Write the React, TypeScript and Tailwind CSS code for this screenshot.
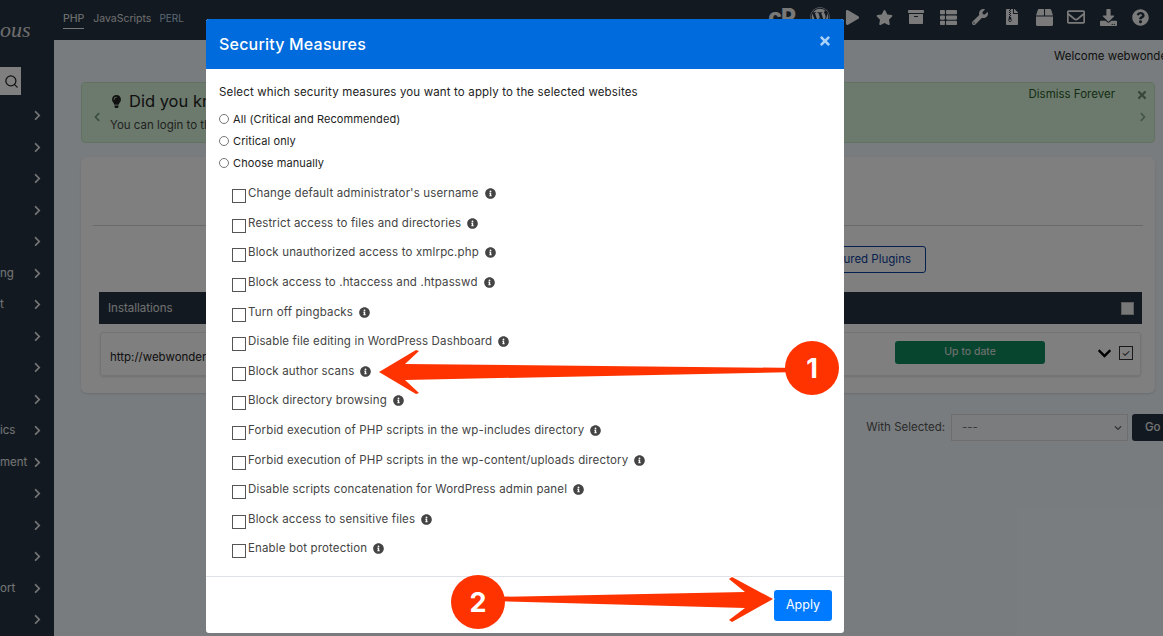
import {
  FaArchive,
  FaBox,
  FaChevronDown,
  FaChevronLeft,
  FaChevronRight,
  FaDownload,
  FaFileArchive,
  FaInfoCircle,
  FaLightbulb,
  FaPlay,
  FaQuestionCircle,
  FaRegEnvelope,
  FaStar,
  FaThList,
  FaTimes,
  FaWordpress,
  FaWrench,
} from "react-icons/fa";
import { Search } from "lucide-react";

const sideLabels = ["", "", "", "", "", "ng", "t", "", "", "", "ics", "ment", "", "", "", "ort", ""];

const measures = [
  "Change default administrator's username",
  "Restrict access to files and directories",
  "Block unauthorized access to xmlrpc.php",
  "Block access to .htaccess and .htpasswd",
  "Turn off pingbacks",
  "Disable file editing in WordPress Dashboard",
  "Block author scans",
  "Block directory browsing",
  "Forbid execution of PHP scripts in the wp-includes directory",
  "Forbid execution of PHP scripts in the wp-content/uploads directory",
  "Disable scripts concatenation for WordPress admin panel",
  "Block access to sensitive files",
  "Enable bot protection",
];

const topIcons = [
  { icon: FaWordpress, size: 20 },
  { icon: FaPlay, size: 15 },
  { icon: FaStar, size: 17 },
  { icon: FaArchive, size: 16 },
  { icon: FaThList, size: 17 },
  { icon: FaWrench, size: 16 },
  { icon: FaFileArchive, size: 16 },
  { icon: FaBox, size: 17 },
  { icon: FaRegEnvelope, size: 18 },
  { icon: FaDownload, size: 17 },
  { icon: FaQuestionCircle, size: 17 },
];

function Sidebar() {
  return (
    <aside className="w-[54px] shrink-0 overflow-hidden bg-[#243342]">
      <div className="h-[67px] overflow-hidden pt-[17px] font-['Liberation_Serif',serif] text-[22px] leading-[26px] text-[#dddddd] italic">
        ous
      </div>
      <div className="flex h-[28px] w-[21px] items-center justify-end bg-white pr-[2px] text-[#222]">
        <Search size={15} strokeWidth={2} />
      </div>
      <ul className="mt-[5px]">
        {sideLabels.map((label, i) => (
          <li key={i} className="flex h-[31.5px] items-center justify-between pr-[11px] text-[11.5px] text-[#e8e8e8]">
            <span>{label}</span>
            <FaChevronRight size={11} />
          </li>
        ))}
      </ul>
    </aside>
  );
}

function TopBar() {
  return (
    <header className="flex h-[40px] items-start bg-[#243342] pl-[9px] text-[10.5px] text-[#eeeeee]">
      <a className="mt-[11px] h-[18px] border-b border-[#eeeeee]">PHP</a>
      <a className="mt-[11px] ml-[9px] text-[#dddddd]">JavaScripts</a>
      <a className="mt-[11px] ml-[8px] text-[10px] text-[#b8d0e0]">PERL</a>
      <div className="ml-auto flex items-center pt-[7px] pr-[7px]">
        <span className="mr-[9px] text-[23px] leading-[20px] font-extrabold tracking-[-1px] text-[#f0f0f0]">cP</span>
        {topIcons.map(({ icon: Icon, size }, i) => (
          <span key={i} className="flex h-[20px] w-[32px] items-center justify-center text-[#f5f5f5]">
            <Icon size={size} />
          </span>
        ))}
      </div>
    </header>
  );
}

function Content() {
  return (
    <main className="h-[596px] bg-[#f2f9fd] pr-[8px] pl-[27px] text-[#222]">
      <p className="h-[42px] pt-[8px] pl-[973px] text-[11.5px] whitespace-nowrap">Welcome webwonderous</p>

      <section className="relative flex h-[61px] rounded-[4px] border border-[#c5e5c5] bg-[#d7f4d8] pl-[10px]">
        <FaChevronLeft size={10} className="mt-[29px] text-[#6e9a78]" />
        <div className="ml-[8px] pt-[7px]">
          <div className="flex items-center gap-[6px] text-[16.5px] leading-[22px]">
            <FaLightbulb size={13} className="text-[#222]" />
            Did you know?
          </div>
          <p className="mt-[5px] text-[11.5px] text-[#444]">You can login to the admin panel with a single click</p>
        </div>
        <div className="absolute top-[3px] right-[6px] flex items-center text-[11.5px] text-[#2a5a2a]">
          Dismiss Forever
          <FaTimes size={12} className="ml-[21px] text-[#6f8f75]" />
        </div>
        <FaChevronRight size={10} className="absolute top-[29px] right-[6px] text-[#84a98c]" />
      </section>

      <section className="mt-[14px] h-[236px] rounded-[6px] bg-white px-[12px] pt-[68px] shadow-sm">
        <div className="border-t border-[#d5d5d5]" />
        <div className="mt-[20px] flex justify-end pr-[217px]">
          <button className="h-[27px] rounded-[3px] border border-[#0b3f9c] px-[14px] text-[11.5px] text-[#0b3f9c]">
            Featured Plugins
          </button>
        </div>
        <div className="mt-[19px] ml-[6px] flex h-[32px] w-[1043px] items-center justify-between bg-[#243342] pr-[8px] pl-[9px] text-[11.5px] text-[#e0e0e0]">
          <span className="pt-[1px]">Installations</span>
          <span className="h-[13px] w-[13px] border border-[#bbbbbb] bg-[#f0f0f0]" />
        </div>
        <div className="mt-[8px] ml-[7px] flex h-[44px] w-[1041px] items-center rounded-[3px] border border-[#e8e8e8] pl-[9px] text-[11.5px] shadow-sm">
          <span className="pt-[7px]">http://webwonderous.com</span>
          <div className="mr-[1px] mb-[4px] ml-auto flex h-[23px] w-[150px] items-center justify-center rounded-[3px] bg-[#108a5c] text-[10.5px] text-[#e8e8e8]">
            Up to date
          </div>
          <FaChevronDown size={15} className="mb-[2px] ml-[51px] text-black" />
          <span className="mr-[7px] mb-[3px] ml-[7px] flex h-[14px] w-[14px] items-center justify-center border border-[#333] text-[10px] leading-none">
            ✓
          </span>
        </div>
      </section>

      <div className="mt-[21px] flex h-[27px] items-center justify-end whitespace-nowrap text-[11.5px]">
        <span className="mr-[6px] pt-[1px] text-[#555]">With Selected:</span>
        <div className="flex h-[27px] w-[177px] shrink-0 items-center justify-between border border-[#dddddd] bg-[#f5f8fb] pr-[5px] pl-[10px] text-[#777]">
          ---
          <FaChevronDown size={8} className="text-[#666]" />
        </div>
        <button className="-mr-[16px] ml-[4px] h-[27px] w-[39px] shrink-0 rounded-l-[3px] bg-[#243342] pl-[13px] text-left font-medium text-[#e8e8e8]">
          Go
        </button>
      </div>
    </main>
  );
}

function SecurityModal() {
  return (
    <div className="absolute top-[19px] left-[206px] flex h-[614px] w-[638px] flex-col overflow-hidden rounded-[3px] bg-white text-[#2f2f2f]">
      <div className="flex h-[50px] shrink-0 items-center justify-between bg-[#006bdc] pr-[12px] pl-[13px] text-white">
        <h2 className="mb-[1px] text-[16px] font-medium tracking-[0.2px]">Security Measures</h2>
        <FaTimes size={14} className="mb-[6px] text-[#a9d0f7]" />
      </div>
      <div className="flex-1 pt-[15px] pl-[13px]">
        <p className="h-[18px] text-[11.5px] tracking-[0.15px] text-[#222]">
          Select which security measures you want to apply to the selected websites
        </p>
        <div className="mt-[6px] text-[11px] tracking-[0.1px] text-[#222]">
          {["All (Critical and Recommended)", "Critical only", "Choose manually"].map((label) => (
            <label key={label} className="flex h-[22px] items-center">
              <input type="radio" name="mode" className="m-0 mb-[1px] h-[10px] w-[10px]" />
              <span className="ml-[4px]">{label}</span>
            </label>
          ))}
        </div>
        <ul className="mt-[5px] pl-[13px] text-[11.5px] tracking-[0.15px] text-[#444]">
          {measures.map((label) => (
            <li key={label} className="flex h-[29.6px] items-center">
              <input
                type="checkbox"
                className="mt-[5px] h-[14px] w-[14px] shrink-0 appearance-none border border-[#555] bg-white"
              />
              <span className="ml-[2px] whitespace-nowrap">{label}</span>
              <FaInfoCircle size={11} className="ml-[6px] text-[#444]" />
            </li>
          ))}
        </ul>
      </div>
      <div className="flex h-[57px] shrink-0 items-center justify-end border-t border-[#dee2e6] pr-[12px]">
        <button className="h-[31px] w-[58px] rounded-[3px] bg-[#007bff] text-[12.5px] text-white">Apply</button>
      </div>
    </div>
  );
}

function Callouts() {
  return (
    <svg className="pointer-events-none absolute inset-0" width="1163" height="636" viewBox="0 0 1163 636">
      <path
        d="M379 372 L416 350 L419 351 L405 364 L800 368 L800 372 L405 380 L419 393 L416 394 Z"
        fill="#ff3300"
      />
      <circle cx="812" cy="368" r="27" fill="#ff3300" />
      <text x="812" y="378" textAnchor="middle" fill="#fff" fontSize="27" fontWeight="700" fontFamily="Inter, sans-serif">
        1
      </text>
      <path
        d="M773 599 L732 577 L729 579 L745 592 L490 597 L490 601 L745 608 L729 620 L732 622 Z"
        fill="#ff3300"
        stroke="#fff"
        strokeWidth="2"
        paintOrder="stroke"
      />
      <circle cx="478" cy="602" r="27" fill="#ff3300" />
      <text x="478" y="612" textAnchor="middle" fill="#fff" fontSize="27" fontWeight="700" fontFamily="Inter, sans-serif">
        2
      </text>
    </svg>
  );
}

export default function App() {
  return (
    <div className="relative flex h-[636px] w-[1163px] overflow-hidden font-['Inter',sans-serif]">
      <Sidebar />
      <div className="min-w-0 flex-1">
        <TopBar />
        <Content />
      </div>
      <div className="absolute inset-0 bg-black/50" />
      <SecurityModal />
      <Callouts />
    </div>
  );
}
